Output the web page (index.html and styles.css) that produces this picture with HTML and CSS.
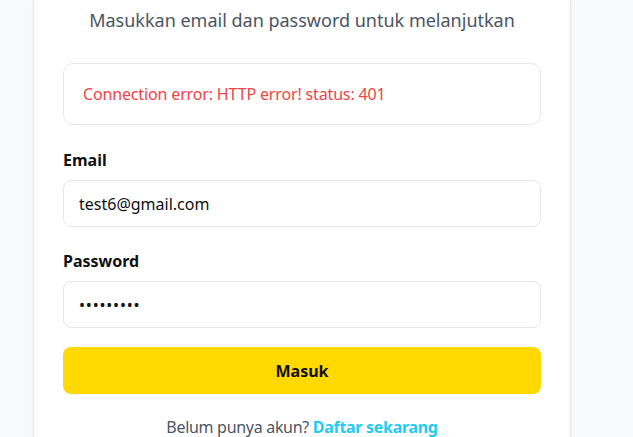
FILE: index.html
```html
<!DOCTYPE html>
<html lang="id">
<head>
<meta charset="utf-8">
<title>Masuk</title>
<link rel="stylesheet" href="styles.css">
</head>
<body>
<main class="page">
  <section class="card">
    <p class="subtitle">Masukkan email dan password untuk melanjutkan</p>
    <div class="alert">Connection error: HTTP error! status: 401</div>
    <form class="form">
      <div class="field">
        <label class="label" for="email">Email</label>
        <input class="input" id="email" type="email" value="test6@gmail.com">
      </div>
      <div class="field field-next">
        <label class="label" for="password">Password</label>
        <input class="input input-pass" id="password" type="password" value="123456789">
      </div>
      <button class="btn" type="button">Masuk</button>
    </form>
    <p class="footer">Belum punya akun? <a class="link" href="#">Daftar sekarang</a></p>
  </section>
</main>
</body>
</html>
```
FILE: styles.css
```css
* { box-sizing: border-box; }
html, body { margin: 0; padding: 0; }
body {
  background: #f8f9fb;
  font-family: "Noto Sans", "Open Sans", sans-serif;
  color: #111;
  height: 437px;
  overflow: hidden;
}
.page {
  padding-left: 33px;
}
.card {
  width: 538px;
  background: #fff;
  border: 1px solid #e8e9ec;
  border-top: none;
  box-shadow: 0 1px 3px rgba(0,0,0,0.05);
  padding: 6px 29px 40px;
}
.subtitle {
  margin: 0;
  text-align: center;
  font-size: 18px;
  line-height: 28px;
  color: #4b5563;
}
.alert {
  margin-top: 29px;
  border: 1px solid #e5e7eb;
  border-radius: 10px;
  padding: 18px 19px;
  font-size: 16px;
  line-height: 24px;
  letter-spacing: -0.15px;
  color: #ef4444;
}
.form {
  display: flex;
  flex-direction: column;
}
.field {
  display: flex;
  flex-direction: column;
  gap: 8px;
  margin-top: 23px;
}
.field-next { margin-top: 22px; }
.label {
  font-size: 16px;
  line-height: 24px;
  font-weight: 700;
  color: #111;
}
.input {
  height: 47px;
  border: 1px solid #e5e7eb;
  border-radius: 8px;
  padding: 0 15px;
  font-family: inherit;
  font-size: 16px;
  color: #111;
  background: #fff;
  outline: none;
}
.input-pass { letter-spacing: 0.8px; }
.btn {
  margin-top: 19px;
  height: 47px;
  border: none;
  border-radius: 8px;
  background: #ffd900;
  font-family: inherit;
  font-size: 16px;
  font-weight: 700;
  color: #111;
}
.footer {
  margin: 21px 0 0;
  text-align: center;
  font-size: 16px;
  line-height: 24px;
  letter-spacing: -0.3px;
  color: #4b5563;
}
.link {
  color: #1ecbf2;
  font-weight: 700;
  text-decoration: none;
}
```
